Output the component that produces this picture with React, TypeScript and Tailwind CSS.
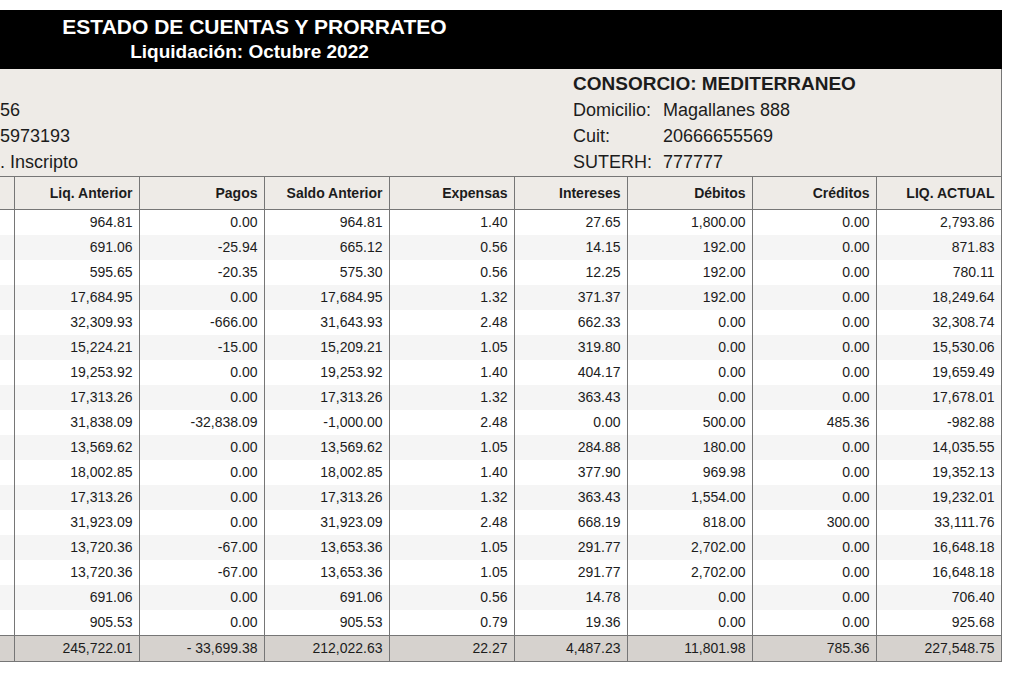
const headers = ["Liq. Anterior", "Pagos", "Saldo Anterior", "Expensas", "Intereses", "Débitos", "Créditos", "LIQ. ACTUAL"]

const rows: string[][] = [
  ["964.81", "0.00", "964.81", "1.40", "27.65", "1,800.00", "0.00", "2,793.86"],
  ["691.06", "-25.94", "665.12", "0.56", "14.15", "192.00", "0.00", "871.83"],
  ["595.65", "-20.35", "575.30", "0.56", "12.25", "192.00", "0.00", "780.11"],
  ["17,684.95", "0.00", "17,684.95", "1.32", "371.37", "192.00", "0.00", "18,249.64"],
  ["32,309.93", "-666.00", "31,643.93", "2.48", "662.33", "0.00", "0.00", "32,308.74"],
  ["15,224.21", "-15.00", "15,209.21", "1.05", "319.80", "0.00", "0.00", "15,530.06"],
  ["19,253.92", "0.00", "19,253.92", "1.40", "404.17", "0.00", "0.00", "19,659.49"],
  ["17,313.26", "0.00", "17,313.26", "1.32", "363.43", "0.00", "0.00", "17,678.01"],
  ["31,838.09", "-32,838.09", "-1,000.00", "2.48", "0.00", "500.00", "485.36", "-982.88"],
  ["13,569.62", "0.00", "13,569.62", "1.05", "284.88", "180.00", "0.00", "14,035.55"],
  ["18,002.85", "0.00", "18,002.85", "1.40", "377.90", "969.98", "0.00", "19,352.13"],
  ["17,313.26", "0.00", "17,313.26", "1.32", "363.43", "1,554.00", "0.00", "19,232.01"],
  ["31,923.09", "0.00", "31,923.09", "2.48", "668.19", "818.00", "300.00", "33,111.76"],
  ["13,720.36", "-67.00", "13,653.36", "1.05", "291.77", "2,702.00", "0.00", "16,648.18"],
  ["13,720.36", "-67.00", "13,653.36", "1.05", "291.77", "2,702.00", "0.00", "16,648.18"],
  ["691.06", "0.00", "691.06", "0.56", "14.78", "0.00", "0.00", "706.40"],
  ["905.53", "0.00", "905.53", "0.79", "19.36", "0.00", "0.00", "925.68"],
]

const totals = ["245,722.01", "- 33,699.38", "212,022.63", "22.27", "4,487.23", "11,801.98", "785.36", "227,548.75"]

export default function App() {
  return (
    <div className="w-[1017px] h-[685px] overflow-hidden bg-white font-['Liberation_Sans',Arial,sans-serif] text-[#1c1c1c]">
      <div className="w-[1002px] pt-[10px]">
        {/* encabezado */}
        <div className="h-[59px] bg-black text-white font-bold">
          <div className="w-[509px] text-center">
            <div className="text-[21px] leading-[24px] pt-[5px]">ESTADO DE CUENTAS Y PRORRATEO</div>
            <div className="text-[19px] leading-[22px] pt-[2px] pr-[10px]">Liquidación: Octubre 2022</div>
          </div>
        </div>

        {/* datos del consorcio */}
        <div className="h-[107px] bg-[#eeebe7] border-r border-[#767676] flex text-[18px] leading-[26px] pt-[2px]">
          <div className="w-[573px]">
            <div className="h-[26px]"></div>
            <div>56</div>
            <div>5973193</div>
            <div>. Inscripto</div>
          </div>
          <div>
            <div className="font-bold text-[19px]">CONSORCIO: MEDITERRANEO</div>
            <div className="flex"><span className="w-[90px]">Domicilio:</span><span>Magallanes 888</span></div>
            <div className="flex"><span className="w-[90px]">Cuit:</span><span>20666655569</span></div>
            <div className="flex"><span className="w-[90px]">SUTERH:</span><span>777777</span></div>
          </div>
        </div>

        {/* prorrateo */}
        <table className="table-fixed border-collapse w-[1001px] text-[14px]">
          <colgroup>
            <col className="w-[14px]" />
            <col className="w-[125px]" />
            <col className="w-[125px]" />
            <col className="w-[125px]" />
            <col className="w-[125px]" />
            <col className="w-[113px]" />
            <col className="w-[125px]" />
            <col className="w-[124px]" />
            <col className="w-[125px]" />
          </colgroup>
          <thead>
            <tr className="h-[33px] bg-[#eeebe7]">
              <th className="border border-l-0 border-[#767676]"></th>
              {headers.map((h) => (
                <th key={h} className="border border-[#767676] text-right pr-[6px] font-bold">{h}</th>
              ))}
            </tr>
          </thead>
          <tbody>
            {rows.map((r, i) => (
              <tr key={i} className={i % 2 === 1 ? "h-[25px] bg-[#f5f5f5]" : "h-[25px] bg-white"}>
                <td className="border-r border-[#767676]"></td>
                {r.map((v, j) => (
                  <td key={j} className="border-x border-[#767676] text-right pr-[6px] leading-[25px] p-0">{v}</td>
                ))}
              </tr>
            ))}
            <tr className="h-[26px] bg-[#d6d2ce]">
              <td className="border border-l-0 border-[#767676]"></td>
              {totals.map((v, j) => (
                <td key={j} className="border border-[#767676] text-right pr-[6px] p-0">{v}</td>
              ))}
            </tr>
          </tbody>
        </table>
      </div>
    </div>
  )
}
